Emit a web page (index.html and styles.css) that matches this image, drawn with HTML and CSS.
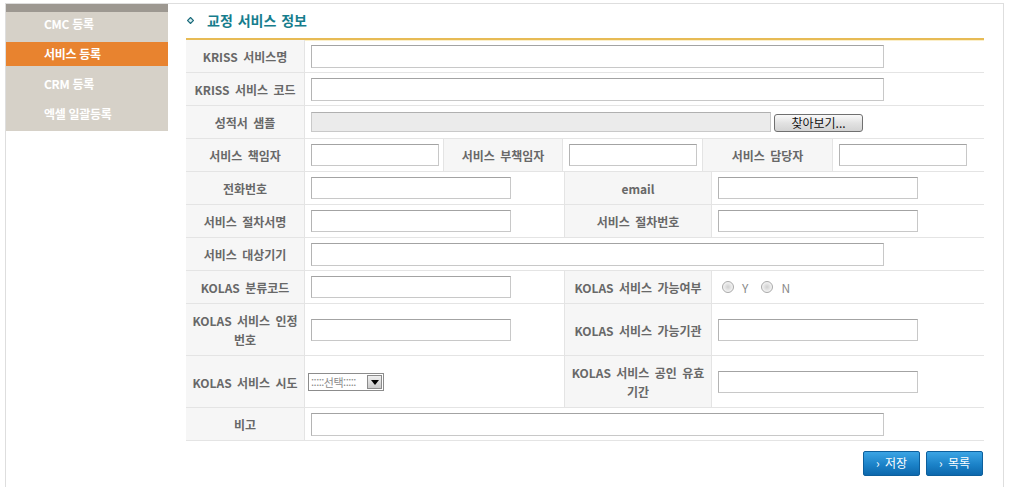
FILE: index.html
```html
<!DOCTYPE html>
<html lang="ko">
<head>
<meta charset="utf-8">
<title>교정 서비스 정보</title>
<link rel="stylesheet" href="styles.css">
</head>
<body>
<div class="frame">
  <aside class="side">
    <div class="side-top"></div>
    <ul class="menu">
      <li>CMC 등록</li>
      <li class="on">서비스 등록</li>
      <li>CRM 등록</li>
      <li>엑셀 일괄등록</li>
    </ul>
  </aside>
  <main class="main">
    <h2 class="title">
      <svg class="bullet" width="7" height="7" viewBox="0 0 7 7"><polygon points="3.5,0.5 6.5,3.5 3.5,6.5 0.5,3.5" fill="#d9eef1" stroke="#1b6b7b" stroke-width="1.2"/></svg>
      <span>교정 서비스 정보</span>
    </h2>
    <div class="form">
      <div class="row c2">
        <div class="lb">KRISS 서비스명</div>
        <div class="vl"><input class="in w-full" type="text"></div>
      </div>
      <div class="row c2">
        <div class="lb">KRISS 서비스 코드</div>
        <div class="vl"><input class="in w-full" type="text"></div>
      </div>
      <div class="row c2">
        <div class="lb">성적서 샘플</div>
        <div class="vl file">
          <span class="file-box"></span>
          <span class="file-btn">찾아보기...</span>
        </div>
      </div>
      <div class="row c6">
        <div class="lb">서비스 책임자</div>
        <div class="vl"><input class="in w-s" type="text"></div>
        <div class="lb">서비스 부책임자</div>
        <div class="vl"><input class="in w-s" type="text"></div>
        <div class="lb">서비스 담당자</div>
        <div class="vl"><input class="in w-s" type="text"></div>
      </div>
      <div class="row c4">
        <div class="lb">전화번호</div>
        <div class="vl"><input class="in w-m" type="text"></div>
        <div class="lb">email</div>
        <div class="vl"><input class="in w-m" type="text"></div>
      </div>
      <div class="row c4">
        <div class="lb">서비스 절차서명</div>
        <div class="vl"><input class="in w-m" type="text"></div>
        <div class="lb">서비스 절차번호</div>
        <div class="vl"><input class="in w-m" type="text"></div>
      </div>
      <div class="row c2">
        <div class="lb">서비스 대상기기</div>
        <div class="vl"><input class="in w-full" type="text"></div>
      </div>
      <div class="row c4">
        <div class="lb">KOLAS 분류코드</div>
        <div class="vl"><input class="in w-m" type="text"></div>
        <div class="lb">KOLAS 서비스 가능여부</div>
        <div class="vl radios">
          <span class="radio"></span><span class="rtxt">Y</span>
          <span class="radio"></span><span class="rtxt">N</span>
        </div>
      </div>
      <div class="row c4">
        <div class="lb">KOLAS 서비스 인정<br>번호</div>
        <div class="vl"><input class="in w-m" type="text"></div>
        <div class="lb">KOLAS 서비스 가능기관</div>
        <div class="vl"><input class="in w-m" type="text"></div>
      </div>
      <div class="row c4">
        <div class="lb">KOLAS 서비스 시도</div>
        <div class="vl">
          <span class="sel"><span class="sel-txt">:::::선택:::::</span><span class="sel-arr"></span></span>
        </div>
        <div class="lb">KOLAS 서비스 공인 유효<br>기간</div>
        <div class="vl"><input class="in w-m" type="text"></div>
      </div>
      <div class="row c2">
        <div class="lb">비고</div>
        <div class="vl"><input class="in w-full" type="text"></div>
      </div>
    </div>
    <div class="btns">
      <span class="btn">› 저장</span>
      <span class="btn">› 목록</span>
    </div>
  </main>
</div>
</body>
</html>
```

FILE: styles.css
```css
* { box-sizing: border-box; }
html, body { margin: 0; padding: 0; background: #fff; }
body {
  font-family: "Noto Sans CJK KR", "Noto Sans", "Liberation Sans", sans-serif;
  font-size: 12px;
  color: #666;
}
.frame {
  margin: 3px 0 0 5px;
  width: 999px;
  height: 484px;
  border: 1px solid #dedede;
  border-bottom: none;
  display: flex;
  align-items: flex-start;
}
.side {
  width: 162px;
  background: #d6d1c8;
  padding-bottom: 5px;
}
.side-top { height: 8px; background: #9d9891; }
.menu { list-style: none; margin: 0; padding: 0; display: flex; flex-direction: column; gap: 6px; }
.menu li {
  height: 24px;
  line-height: 24px;
  padding-left: 38px;
  color: #fff;
  font-weight: bold;
  font-size: 12px;
  letter-spacing: -0.3px;
}
.menu li.on { background: #e8832f; }

.main { flex: 1; padding-left: 18px; }
.title {
  margin: 0;
  width: 798px;
  height: 36px;
  display: flex;
  align-items: center;
  border-bottom: 2px solid #e7bb55;
  box-shadow: 0 1px 0 #fbefc9;
  padding: 0 0 2px 1px;
  font-size: 14px;
  font-weight: bold;
  color: #167d8d;
  word-spacing: 1px;
}
.bullet { margin-right: 13px; }

.form { width: 798px; }
.row { display: grid; border-bottom: 1px solid #e4e4e4; }
.c2 { grid-template-columns: 119px 679px; }
.c4 { grid-template-columns: 119px 260px 147px 272px; }
.c6 { grid-template-columns: 119px 139px 119px 140px 130px 151px; }
.lb {
  background: #f6f6f6;
  border-right: 1px solid #e4e4e4;
  text-align: center;
  font-weight: bold;
  color: #686868;
  line-height: 19px;
  padding: 7px 3px 6px;
  word-spacing: 2px;
  display: flex;
  align-items: center;
  justify-content: center;
}
.vl {
  display: flex;
  align-items: center;
  padding: 0 6px;
  border-right: 1px solid #e4e4e4;
}
.row > .vl:last-child { border-right: none; }
.in {
  height: 22px;
  border: 1px solid #c8c8c8;
  border-top-color: #a3a3a3;
  border-left-color: #b4b4b4;
  background: #fff;
  margin: 0;
  padding: 0 3px;
  font: inherit;
}
.w-full { width: 573px; height: 23px; }
.w-m { width: 200px; }
.w-s { width: 128px; }

.file { gap: 3px; }
.file-box {
  width: 460px;
  height: 20px;
  background: #ebebeb;
  border: 1px solid #c9c9c9;
  border-top-color: #b0b0b0;
}
.file-btn {
  width: 89px;
  height: 18px;
  border: 1px solid #707070;
  border-radius: 3px;
  background: linear-gradient(#fafafa, #e2e2e2 50%, #d3d3d3);
  color: #111;
  font-size: 12px;
  line-height: 15px;
  text-align: center;
  margin-top: 2px;
}

.radios { gap: 0; padding-left: 10px; }
.radio {
  width: 12px;
  height: 12px;
  border-radius: 50%;
  border: 1px solid #a9a9a9;
  background: radial-gradient(circle at 50% 50%, #d0d0d0 0, #e4e4e4 40%, #f4f4f4 70%);
}
.rtxt { color: #8a8a8a; font-size: 12px; margin: 0 13px 0 8px; }

.sel {
  display: flex;
  align-items: center;
  width: 76px;
  height: 18px;
  border: 1px solid #8c8c8c;
  background: #fff;
  margin-left: -3px;
}
.sel-txt {
  flex: 1;
  font-size: 11px;
  color: #8a8a8a;
  line-height: 14px;
  padding-left: 2px;
  letter-spacing: -0.5px;
  white-space: nowrap;
  overflow: hidden;
}
.sel-arr {
  width: 15px;
  height: 14px;
  margin-right: 1px;
  border: 1px solid #8c8c8c;
  background: linear-gradient(#f0f0f0, #c9c9c9);
  position: relative;
}
.sel-arr::after {
  content: "";
  position: absolute;
  left: 3px;
  top: 4px;
  border-left: 4px solid transparent;
  border-right: 4px solid transparent;
  border-top: 5px solid #000;
}

.btns {
  width: 798px;
  display: flex;
  justify-content: flex-end;
  gap: 6px;
  margin-top: 10px;
  padding-right: 1px;
}
.btn {
  width: 57px;
  height: 25px;
  border-radius: 2px;
  background: linear-gradient(#3ba4e4, #1b82c8 55%, #0d68ad);
  border: 1px solid #0d5f9c;
  color: #fff;
  font-size: 12px;
  line-height: 22px;
  text-align: center;
  word-spacing: 2px;
}
```
